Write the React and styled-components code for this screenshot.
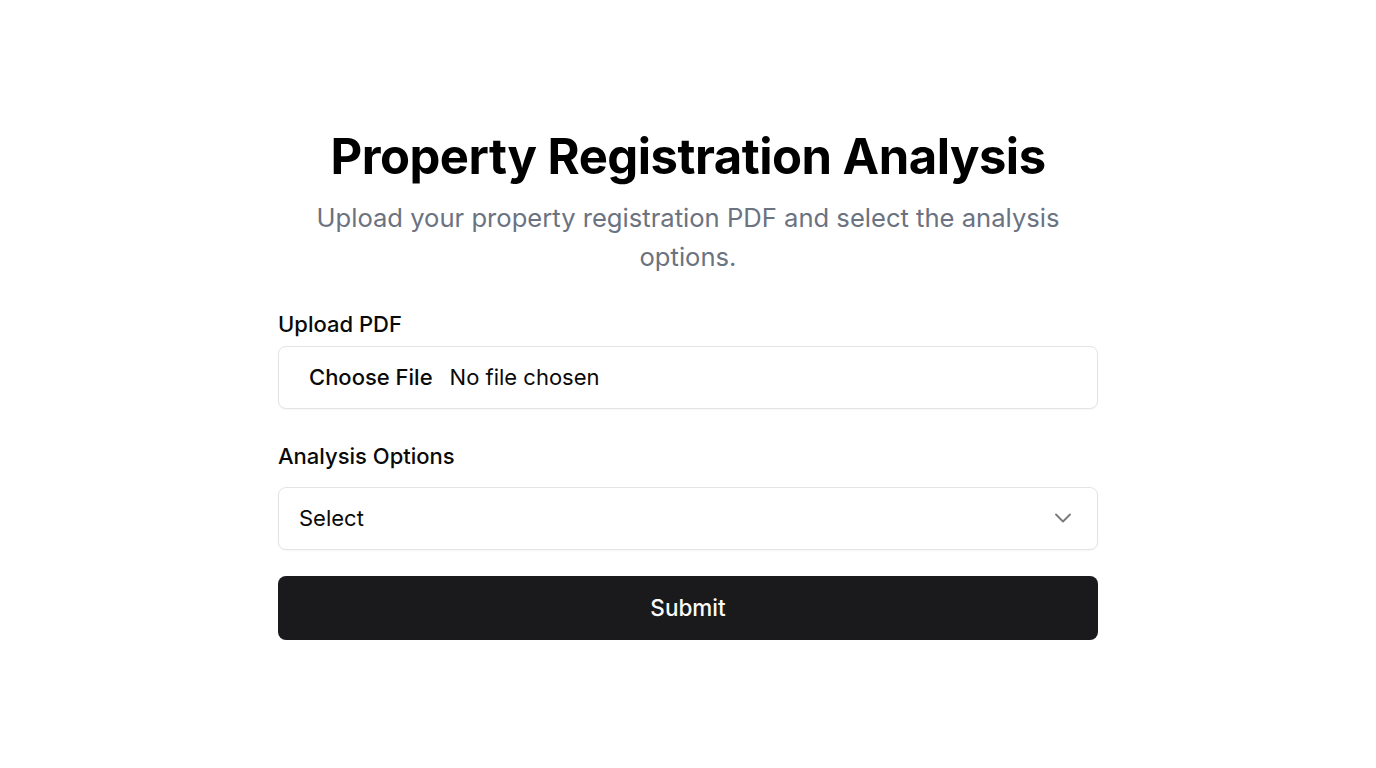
import React from "react";
import styled, { createGlobalStyle } from "styled-components";

const Global = createGlobalStyle`
  html, body { margin: 0; padding: 0; background: #fff; }
  body { font-family: Inter, "Noto Sans", sans-serif; color: #0a0a0a; }
  * { box-sizing: border-box; }
`;

const Page = styled.main`
  min-height: 100vh;
  padding-bottom: 2px;
  display: flex;
  align-items: center;
  justify-content: center;
`;

const Container = styled.div`
  width: 820px;
  display: flex;
  flex-direction: column;
`;

const Header = styled.header`
  display: flex;
  flex-direction: column;
  align-items: center;
  text-align: center;
  margin-bottom: 33px;
`;

const Title = styled.h1`
  margin: 0;
  font-size: 49px;
  line-height: 60px;
  font-weight: 700;
  letter-spacing: -0.5px;
  color: #000;
`;

const Subtitle = styled.p`
  margin: 11px 0 0;
  font-size: 25.6px;
  line-height: 39px;
  color: #6b7280;
`;

const Form = styled.form`
  display: flex;
  flex-direction: column;
`;

const Field = styled.div`
  display: flex;
  flex-direction: column;
  gap: ${(p) => p.$gap}px;
  margin-bottom: ${(p) => p.$mb || 0}px;
`;

const Label = styled.label`
  font-size: 22px;
  line-height: 30px;
  font-weight: 500;
  color: #0a0a0a;
`;

const Box = styled.div`
  height: 63px;
  border: 1px solid #e4e4e7;
  border-radius: 8px;
  display: flex;
  align-items: center;
  font-size: 22px;
  color: #0a0a0a;
  background: #fff;
  box-shadow: 0 1px 2px rgba(0, 0, 0, 0.04);
`;

const FileBox = styled(Box)`
  padding-left: 30px;
  gap: 17px;
`;

const FileButton = styled.span`
  font-weight: 500;
`;

const SelectBox = styled(Box)`
  padding: 0 20px 0 20px;
  justify-content: space-between;
`;

const SubmitButton = styled.button`
  height: 64px;
  border: none;
  border-radius: 8px;
  background: #1a1a1c;
  color: #fafafa;
  font-family: inherit;
  font-size: 22.5px;
  font-weight: 500;
  cursor: pointer;
`;

const Chevron = () => (
  <svg width="28" height="28" viewBox="0 0 24 24" fill="none" stroke="#7a7a7a" strokeWidth="1.6" strokeLinecap="round" strokeLinejoin="round">
    <path d="m6 9 6 6 6-6" />
  </svg>
);

export default function App() {
  return (
    <>
      <Global />
      <Page>
        <Container>
          <Header>
            <Title>Property Registration Analysis</Title>
            <Subtitle>
              Upload your property registration PDF and select the analysis options.
            </Subtitle>
          </Header>
          <Form onSubmit={(e) => e.preventDefault()}>
            <Field $gap={7} $mb={32}>
              <Label>Upload PDF</Label>
              <FileBox>
                <FileButton>Choose File</FileButton>
                <span>No file chosen</span>
              </FileBox>
            </Field>
            <Field $gap={16} $mb={26}>
              <Label>Analysis Options</Label>
              <SelectBox>
                <span>Select</span>
                <Chevron />
              </SelectBox>
            </Field>
            <SubmitButton type="submit">Submit</SubmitButton>
          </Form>
        </Container>
      </Page>
    </>
  );
}
